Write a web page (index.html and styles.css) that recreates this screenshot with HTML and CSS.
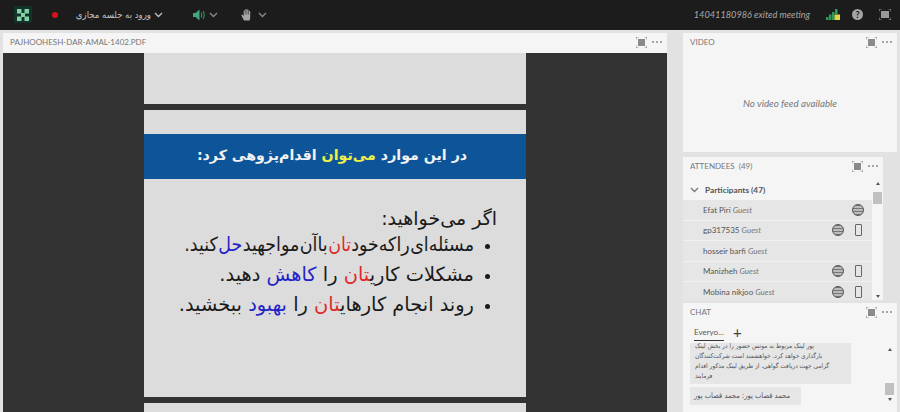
FILE: index.html
```html
<!DOCTYPE html>
<html lang="fa">
<head>
    <meta charset="UTF-8">
    <meta name="viewport" content="width=device-width, initial-scale=1.0">
    <title>Meeting</title>
    <link rel="stylesheet" href="styles.css">
</head>
<body>
    <div class="topbar">
        <div class="apps-btn">
            <svg width="12" height="12" viewBox="0 0 12 12"><g fill="#86d0a6"><rect x="0" y="0" width="4.500" height="4.500"/><rect x="7.500" y="0" width="4.500" height="4.500"/><rect x="0" y="7.500" width="4.500" height="4.500"/><rect x="7.500" y="7.500" width="4.500" height="4.500"/><rect x="4" y="4" width="4" height="4"/></g></svg>
        </div>
        <span class="rec-dot"></span>
        <span class="room-name" dir="rtl">ورود به جلسه مجازی</span>
        <svg class="chev room-chev" width="9" height="6" viewBox="0 0 9 6"><path d="M1 1l3.500 3.500L8 1" fill="none" stroke="#bbb" stroke-width="1.400"/></svg>
        <svg class="speaker" width="12" height="12" viewBox="0 0 12 12"><path d="M0 4h2.500l4-3.500v11l-4-3.500H0z" fill="#43a77e"/><path d="M8 3.500q1.500 2.500 0 5M10 2q2.500 4 0 8" fill="none" stroke="#3b8f6c" stroke-width="1.100"/></svg>
        <svg class="chev speaker-chev" width="9" height="6" viewBox="0 0 9 6"><path d="M1 1l3.500 3.500L8 1" fill="none" stroke="#888" stroke-width="1.400"/></svg>
        <svg class="hand" width="12" height="13" viewBox="0 0 12 13"><path d="M3 12.500L.2 7l1-.6L2.700 8V2.500h1.200V6.500h.5V1h1.300v5.500h.5V1.500h1.300v5h.5V3h1.200v6.500L8.700 12.500z" fill="#a5a5a5"/></svg>
        <svg class="chev hand-chev" width="9" height="6" viewBox="0 0 9 6"><path d="M1 1l3.500 3.500L8 1" fill="none" stroke="#888" stroke-width="1.400"/></svg>
        <span class="status-msg">14041180986 exited meeting</span>
        <svg class="signal" width="14" height="11" viewBox="0 0 14 11"><rect x="0" y="8" width="2.500" height="3" fill="#2f9a58"/><rect x="3" y="5.500" width="2.500" height="5.500" fill="#2f9a58"/><rect x="6" y="3" width="2.500" height="8" fill="#2f9a58"/><rect x="9" y="0" width="2.500" height="5" fill="#2f9a58"/><rect x="8.500" y="5.500" width="5.500" height="5.500" fill="#dcd84a"/></svg>
        <span class="help">?</span>
        <svg class="full" width="12" height="11" viewBox="0 0 12 11"><rect x="2" y="2" width="8" height="7" fill="#999"/><path d="M0 2.500V0h2.500M9.500 0H12v2.500M12 8.500V11H9.500M2.500 11H0V8.500" fill="none" stroke="#999"/></svg>
    </div>

    <div class="main">
        <!-- document pod -->
        <div class="pod doc-pod">
            <div class="pod-head">
                <span class="pod-title">PAJHOOHESH-DAR-AMAL-1402.PDF</span>
                <svg class="pod-max" width="11" height="11" viewBox="0 0 11 11"><rect x="2" y="2" width="7" height="7" fill="#8a8a8a"/><path d="M0 2.500V0h2.500M8.500 0H11v2.500M11 8.500V11H8.500M2.500 11H0V8.500" fill="none" stroke="#8a8a8a"/></svg>
                <span class="pod-menu"><i></i><i></i><i></i></span>
            </div>
            <div class="doc-view">
                <div class="slide slide-cut"></div>
                <div class="slide" dir="rtl">
                    <div class="slide-banner">در این موارد <span class="yellow">می‌توان</span> اقدام‌پژوهی کرد:</div>
                    <div class="slide-body">
                        <div class="slide-lead">اگر می‌خواهید:</div>
                        <ul class="slide-list">
                            <li class="tight">مسئله‌ای راکه‌خود<span class="red">تان</span> باآن مواجهید <span class="blue">حل</span> کنید.</li>
                            <li>مشکلات کاری<span class="red">تان</span> را <span class="blue">کاهش</span> دهید.</li>
                            <li>روند انجام کارهای<span class="red">تان</span> را <span class="blue">بهبود</span> ببخشید.</li>
                        </ul>
                    </div>
                </div>
                <div class="slide slide-next"></div>
            </div>
        </div>

        <div class="side">
            <!-- video -->
            <div class="pod video-pod">
                <div class="pod-head">
                    <span class="pod-title">VIDEO</span>
                    <svg class="pod-max" width="11" height="11" viewBox="0 0 11 11"><rect x="2" y="2" width="7" height="7" fill="#8a8a8a"/><path d="M0 2.500V0h2.500M8.500 0H11v2.500M11 8.500V11H8.500M2.500 11H0V8.500" fill="none" stroke="#8a8a8a"/></svg>
                    <span class="pod-menu"><i></i><i></i><i></i></span>
                </div>
                <div class="no-video">No video feed available</div>
            </div>

            <!-- attendees -->
            <div class="pod att-pod">
                <div class="pod-head">
                    <span class="pod-title">ATTENDEES &nbsp;(49)</span>
                    <svg class="pod-max" width="11" height="11" viewBox="0 0 11 11"><rect x="2" y="2" width="7" height="7" fill="#8a8a8a"/><path d="M0 2.500V0h2.500M8.500 0H11v2.500M11 8.500V11H8.500M2.500 11H0V8.500" fill="none" stroke="#8a8a8a"/></svg>
                    <span class="pod-menu"><i></i><i></i><i></i></span>
                </div>
                <div class="att-body">
                    <div class="att-list">
                        <div class="att-group">
                            <svg width="9" height="6" viewBox="0 0 9 6"><path d="M1 1l3.500 3.500L8 1" fill="none" stroke="#777" stroke-width="1.300"/></svg>
                            Participants (47)
                        </div>
                        <div class="att-row"><span class="att-name">Efat Piri <em>Guest</em></span><span class="phone-slot"><span class="globe"></span></span></div>
                        <div class="att-row"><span class="att-name">gp317535 <em>Guest</em></span><span class="globe"></span><span class="phone-slot"><span class="phone"></span></span></div>
                        <div class="att-row"><span class="att-name">hosseir barfi <em>Guest</em></span></div>
                        <div class="att-row"><span class="att-name">Manizheh <em>Guest</em></span><span class="globe"></span><span class="phone-slot"><span class="phone"></span></span></div>
                        <div class="att-row"><span class="att-name">Mobina nikjoo <em>Guest</em></span><span class="globe"></span><span class="phone-slot"><span class="phone"></span></span></div>
                    </div>
                    <div class="scroller att-scroller">
                        <span class="arrow-up"></span>
                        <span class="thumb"></span>
                        <span class="arrow-down"></span>
                    </div>
                </div>
            </div>

            <!-- chat -->
            <div class="pod chat-pod">
                <div class="pod-head">
                    <span class="pod-title">CHAT</span>
                    <svg class="pod-max" width="11" height="11" viewBox="0 0 11 11"><rect x="2" y="2" width="7" height="7" fill="#8a8a8a"/><path d="M0 2.500V0h2.500M8.500 0H11v2.500M11 8.500V11H8.500M2.500 11H0V8.500" fill="none" stroke="#8a8a8a"/></svg>
                    <span class="pod-menu"><i></i><i></i><i></i></span>
                </div>
                <div class="chat-tabs">
                    <span class="chat-tab">Everyo...</span>
                    <span class="chat-add">+</span>
                </div>
                <div class="chat-body">
                    <div class="chat-msgs">
                        <div class="msg msg-long" dir="rtl">پور لینک مربوط به موتس حضور را در بخش لینک<br>بارگذاری خواهد کرد. خواهشمند است شرکت‌کنندگان<br>گرامی جهت دریافت گواهی، از طریق لینک مذکور اقدام<br>فرمایند</div>
                        <div class="msg msg-short" dir="rtl">محمد قصاب پور: محمد قصاب پور</div>
                    </div>
                    <div class="scroller chat-scroller">
                        <span class="arrow-up"></span>
                        <span class="thumb"></span>
                        <span class="arrow-down"></span>
                    </div>
                </div>
            </div>
        </div>
    </div>
</body>
</html>
```

FILE: styles.css
```css
* {
    margin: 0;
    padding: 0;
    box-sizing: border-box;
}

html, body {
    width: 900px;
    height: 412px;
    overflow: hidden;
}

body {
    font-family: 'Lato', 'Open Sans', 'DejaVu Sans', sans-serif;
    background: #e2e2e2;
    color: #555;
}

.topbar {
    height: 30px;
    padding-bottom: 1px;
    background: #1c1c1c;
    display: flex;
    align-items: center;
}

.apps-btn {
    width: 18px;
    height: 17px;
    margin-left: 14px;
    background: #12332a;
    display: flex;
    align-items: center;
    justify-content: center;
}

.rec-dot {
    width: 6px;
    height: 6px;
    margin-left: 20px;
    border-radius: 50%;
    background: #d8121c;
}

.room-name {
    width: 77px;
    margin-left: 16px;
    font-family: 'DejaVu Sans', sans-serif;
    font-stretch: condensed;
    font-size: 9.500px;
    color: #c4c4c4;
    white-space: nowrap;
}

.room-chev { margin-left: 3px; }
.speaker { margin-left: 30px; }
.speaker-chev { margin-left: 4px; }
.hand { margin-left: 23px; }
.hand-chev { margin-left: 5px; }

.status-msg {
    margin-left: auto;
    font-size: 9.200px;
    font-style: italic;
    color: #a8a8a8;
}

.signal { margin-left: 16px; }

.help {
    width: 11px;
    height: 11px;
    margin-left: 12px;
    border-radius: 50%;
    background: #a5a5a5;
    color: #1c1c1c;
    font-size: 9px;
    font-weight: bold;
    line-height: 11px;
    text-align: center;
}

.full {
    margin-left: 16px;
    margin-right: 9px;
}

.main {
    display: flex;
    height: 382px;
    padding: 3px 3px 0 3px;
}

.pod {
    background: #f5f5f5;
    display: flex;
    flex-direction: column;
}

.pod-head {
    display: flex;
    align-items: center;
    height: 20px;
    padding: 0 5px 2px 7px;
    flex: none;
}

.pod-title {
    font-size: 8px;
    color: #777;
    flex: 1;
}

.pod-max { margin-right: 5px; }

.pod-menu {
    display: flex;
    gap: 1.500px;
}

.pod-menu i {
    width: 2.500px;
    height: 2.500px;
    border-radius: 50%;
    background: #888;
}

.doc-pod {
    width: 664px;
    margin-right: 16px;
}

.doc-view {
    flex: 1;
    background: #333;
    overflow: hidden;
    display: flex;
    flex-direction: column;
    align-items: center;
    gap: 6px;
}

.slide {
    width: 382px;
    background: #dcdcdc;
    flex: none;
    height: 287px;
    padding-top: 24px;
    font-family: 'DejaVu Sans', sans-serif;
    color: #1a1a1a;
}

.slide-cut { height: 51px; padding: 0; }
.slide-next { height: 20px; padding: 0; }

.slide-banner {
    height: 45px;
    padding-right: 6px;
    background: #0d5499;
    color: #f2f2f2;
    font-size: 14.200px;
    font-weight: bold;
    line-height: 43px;
    text-align: center;
}

.yellow { color: #eef04a; }
.red { color: #e02a2a; }
.blue { color: #2323c8; }

.slide-body {
    padding: 24px 29px 0 0;
    font-size: 19px;
    line-height: 30px;
}

.slide-lead { line-height: 30px; margin-bottom: -3px; }

.slide-list {
    list-style: disc;
    padding-right: 23px;
    font-size: 19.400px;
}

.slide-list li::marker { font-size: 15px; }

.tight {
    font-stretch: condensed;
    word-spacing: -5px;
}

.side {
    flex: 1;
    display: flex;
    flex-direction: column;
}

.video-pod {
    height: 119px;
    flex: none;
    margin-bottom: 5px;
}

.no-video {
    flex: 1;
    display: flex;
    align-items: center;
    justify-content: center;
    font-size: 9.800px;
    font-style: italic;
    color: #777;
}

.att-pod {
    height: 143px;
    flex: none;
    width: 200px;
    margin-bottom: 3px;
}

.att-pod .pod-head,
.chat-pod .pod-head { height: 18px; padding-bottom: 0; }

.att-body {
    flex: 1;
    display: flex;
    overflow: hidden;
    padding-top: 5px;
}

.att-list {
    flex: 1;
    overflow: hidden;
}

.att-group {
    height: 20px;
    display: flex;
    align-items: center;
    gap: 6px;
    padding-left: 7px;
    font-size: 8.300px;
    font-weight: 700;
    color: #555;
}

.att-row {
    height: 20.500px;
    background: #e6e6e6;
    border-bottom: 1px solid #f0f0f0;
    display: flex;
    align-items: center;
    padding-left: 20px;
}

.att-name {
    flex: 1;
    font-size: 8px;
    color: #555;
    white-space: nowrap;
}

.att-name em { color: #777; }

.globe {
    width: 12px;
    height: 12px;
    border-radius: 50%;
    border: 1px solid #555;
    background: repeating-linear-gradient(#777 0 1px, #bbb 1px 3px);
}

.phone-slot {
    width: 28px;
    display: flex;
    justify-content: center;
}

.phone {
    width: 7px;
    height: 12px;
    border: 1px solid #666;
    border-radius: 1px;
}

.scroller {
    width: 11px;
    display: flex;
    flex-direction: column;
    align-items: center;
    flex: none;
}

.arrow-up, .arrow-down {
    width: 0;
    height: 0;
    border-left: 2.500px solid transparent;
    border-right: 2.500px solid transparent;
}

.arrow-up { border-bottom: 3px solid #555; margin-top: 2px; }
.arrow-down { border-top: 3px solid #555; margin-top: auto; margin-bottom: 2px; }

.thumb {
    width: 9px;
    height: 12px;
    background: #c0c0c0;
    margin-top: 7px;
}

.chat-pod {
    flex: 1;
    min-height: 0;
    overflow: hidden;
}

.chat-tabs {
    height: 22px;
    flex: none;
    display: flex;
    align-items: center;
    padding-left: 11px;
    font-size: 8px;
    color: #555;
}

.chat-tab {
    width: 30px;
    border-bottom: 1px solid #333;
    padding-bottom: 3px;
    margin-top: 4px;
}

.chat-add {
    margin-left: 9px;
    font-size: 15px;
    line-height: 15px;
    color: #444;
}

.chat-body {
    flex: 1;
    min-height: 0;
    display: flex;
}

.chat-msgs {
    flex: 1;
    overflow: hidden;
    margin-right: 10px;
    display: flex;
    flex-direction: column;
    justify-content: flex-end;
    align-items: flex-start;
    gap: 3px;
    padding: 0 0 7px 7px;
    font-family: 'DejaVu Sans', sans-serif;
    font-stretch: condensed;
    font-size: 6.500px;
    line-height: 10px;
    color: #555;
}

.msg {
    background: #e6e6e6;
    flex: none;
    text-align: left;
    white-space: nowrap;
}

.msg-long {
    width: 161px;
    padding: 3px 13px 3px 5px;
}

.msg-short {
    width: 111px;
    padding: 4px 8px 4px 4px;
    font-size: 7.500px;
}

.chat-scroller {
    margin-right: 2px;
}

.chat-scroller .arrow-up { margin-top: 5px; }

.chat-scroller .thumb {
    height: 12px;
    margin-top: auto;
    margin-bottom: 3px;
}

.chat-scroller .arrow-down { margin-top: 0; margin-bottom: 11px; }
```
